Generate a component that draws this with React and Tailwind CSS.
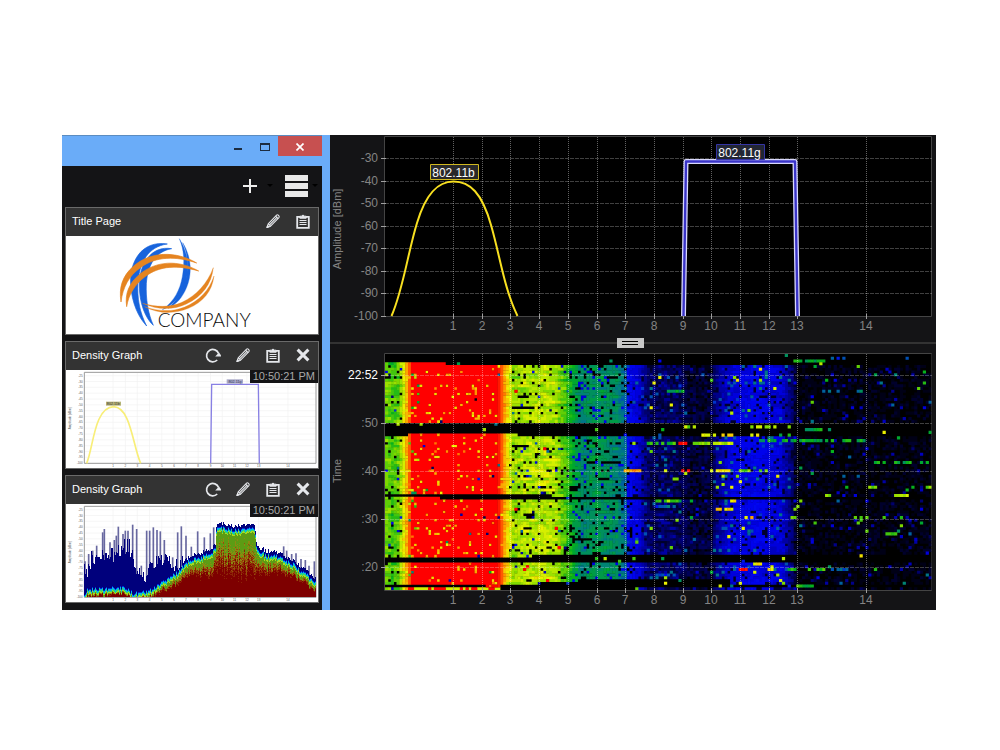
import { useMemo } from "react";

const channels = [
  { name: "1", x: 123 }, { name: "2", x: 152 }, { name: "3", x: 180 }, { name: "4", x: 209 },
  { name: "5", x: 238 }, { name: "6", x: 267 }, { name: "7", x: 295 }, { name: "8", x: 324 },
  { name: "9", x: 353 }, { name: "10", x: 381 }, { name: "11", x: 410 }, { name: "12", x: 439 },
  { name: "13", x: 467 }, { name: "14", x: 536 },
];

const amplitudes = [
  { name: "-30", y: 23 }, { name: "-40", y: 46 }, { name: "-50", y: 68 }, { name: "-60", y: 91 },
  { name: "-70", y: 113 }, { name: "-80", y: 136 }, { name: "-90", y: 158 }, { name: "-100", y: 181 },
];

const times = [
  { name: "22:52", y: 27, bright: true }, { name: ":50", y: 75 }, { name: ":40", y: 123 },
  { name: ":30", y: 171 }, { name: ":20", y: 219 },
];

function makeRandom(seed) {
  let s = seed;
  return () => {
    s = (s * 1664525 + 1013904223) % 4294967296;
    return s / 4294967296;
  };
}

// linear interpolation in a list of [position, value]
function lerp(points, at) {
  if (at <= points[0][0]) return points[0][1];
  for (let i = 1; i < points.length; i++) {
    if (at <= points[i][0]) {
      const [x0, y0] = points[i - 1];
      const [x1, y1] = points[i];
      return y0 + ((y1 - y0) * (at - x0)) / (x1 - x0);
    }
  }
  return points[points.length - 1][1];
}

const heatStops = [
  [0, [0, 0, 0]], [0.12, [0, 0, 105]], [0.24, [0, 0, 235]], [0.29, [0, 10, 240]], [0.35, [0, 80, 180]],
  [0.42, [0, 130, 120]], [0.52, [0, 175, 30]], [0.62, [120, 215, 0]], [0.72, [235, 245, 0]],
  [0.86, [255, 140, 0]], [0.97, [255, 0, 0]], [1, [255, 0, 0]],
];

function heatColor(v) {
  const c = [0, 1, 2].map((k) => Math.round(lerp(heatStops.map(([p, rgb]) => [p, rgb[k]]), v)));
  return `rgb(${c.join(",")})`;
}

// turns a grid of color keys into one path per color, the overlap hides seams between cells
function gridToPaths(rows, cols, overlap, getKey) {
  const paths = {};
  for (let r = 0; r < rows; r++) {
    let start = 0;
    let key = getKey(r, 0);
    for (let c = 1; c <= cols; c++) {
      const next = c < cols ? getKey(r, c) : null;
      if (next !== key || c === cols) {
        const w = c - start + (c < cols ? overlap : 0);
        const h = r < rows - 1 ? 1 + overlap : 1;
        if (key !== null) paths[key] = (paths[key] || "") + `M${start} ${r}h${w}v${h}h-${w}z`;
        start = c;
        key = next;
      }
    }
  }
  return Object.entries(paths);
}

const ROWS = 86;
const COLS = 190;

const level = [
  [0, 0.62], [2, 0.57], [4, 0.6], [5.5, 0.68], [6.5, 0.75], [7.5, 0.84], [9, 1], [38, 1], [40, 0.9], [42, 0.75],
  [44, 0.64], [48, 0.66], [55, 0.68], [59, 0.66], [62, 0.58], [65, 0.49], [68, 0.43], [72, 0.46], [80, 0.44],
  [83, 0.38], [84, 0.28], [88, 0.21], [91, 0.12], [97, 0.16], [103, 0.13], [106, 0.05], [112, 0.05], [115, 0.15],
  [119, 0.22], [128, 0.25], [137, 0.22], [141, 0.13], [143, 0.02], [190, 0.01],
];

// bursts: row, first column, last column, level, density
const bursts = [
  [2, 141, 153, 0.5, 0.7], [1, 155, 160, 0.34, 0.7], [13, 98, 104, 0.48, 0.6], [13, 152, 167, 0.4, 0.5],
  [26, 100, 115, 0.66, 0.4], [26, 122, 142, 0.66, 0.35], [27, 145, 155, 0.5, 0.5], [29, 110, 130, 0.74, 0.5],
  [31, 130, 167, 0.5, 0.55], [32, 90, 101, 0.56, 0.6], [32, 101, 107, 0.97, 0.5], [32, 107, 121, 0.66, 0.8],
  [39, 166, 190, 0.5, 0.4], [42, 83, 89, 0.85, 0.7], [42, 103, 106, 1, 0.8], [42, 113, 121, 0.76, 0.7],
  [42, 122, 137, 0.6, 0.5], [48, 168, 172, 0.62, 0.9], [48, 188, 190, 0.62, 1], [51, 150, 155, 0.6, 0.7],
  [51, 177, 182, 0.66, 0.9], [53, 94, 107, 0.52, 0.7], [53, 118, 125, 0.76, 0.6], [55, 94, 104, 0.36, 0.7],
  [56, 113, 121, 0.76, 0.6], [59, 125, 128, 0.76, 0.9], [59, 140, 143, 0.6, 0.6], [59, 160, 180, 0.6, 0.45],
  [65, 174, 178, 0.55, 1], [76, 128, 131, 0.74, 0.8], [78, 123, 128, 0.95, 0.6], [78, 133, 135, 0.76, 1],
  [78, 140, 153, 0.55, 0.7], [78, 154, 162, 0.35, 0.5], [80, 94, 101, 0.3, 0.8], [84, 143, 149, 0.53, 1],
];

const blackRuns = [
  [8, 77, 81], [15, 46, 50], [19, 44, 52], [33, 44, 50], [39, 75, 82], [45, 74, 78], [58, 48, 52], [67, 66, 72],
];

function isGap(r, c) {
  if (r < 3) return true;
  if (r === 3) return c > 20;
  if (r >= 25 && r <= 28) return true;
  if (r === 29) return c < 8 || c > 45;
  if (r === 51) return c < 57;
  if (r === 52) return c > 18;
  if (r === 74 || r === 75) return true;
  if (r === 73) return c > 50;
  if (r === 82) return c > 66 && c < 120;
  if (r === 83) return c > 53 && c < 120;
  if (r === 84) return c < 35 || c > 39;
  if (r === 85) return c > 39 && c < 88;
  return false;
}

function buildWaterfall() {
  const random = makeRandom(2252);
  const grid = [];
  for (let r = 0; r < ROWS; r++) {
    const line = [];
    const busy = r % 7 === 0 || (r > 47 && r < 52) || (r > 67 && r < 73) ? 1.6 : 0.8;
    let drift = 0;
    for (let c = 0; c < COLS; c++) {
      const p = random();
      const q = random();
      drift = drift * 0.5 + (q - 0.5) * 0.5;
      let v = lerp(level, c);
      if (isGap(r, c)) {
        v = 0;
        if (p < 0.014) v = 0.25 + q * 0.5;
      } else if (v > 0.86) {
        if (p < 0.085 * busy) v = 0.72 + q * 0.16;
        else if (p > 0.993) v = q * 0.55;
        if (c < 12 && p > 0.88) v = 0.4 + q * 0.4;
        if (r === 85) v = p < 0.4 ? 0.7 : 0.97;
      } else if (v > 0.54) {
        v += drift * 0.17;
        if (c > 42 || c < 6) {
          if (p < 0.09 * busy) v = 0;
          else if (p < 0.115 * busy) v = 0.1 + q * 0.3;
          else if (p > 0.995) v = 0.97;
        }
      } else if (v > 0.26) {
        v += drift * 0.12;
        if (p < 0.11 * busy) v = 0;
        else if (p < 0.2 && c > 66 && c < 74) v = 0.22;
        else if (p < 0.15) v = 0.25;
      } else if (v > 0.1) {
        v += drift * 0.1;
        if (c > 91 && c < 108) v *= 0.4 + q * 0.6;
        if (p < 0.11) v = 0.06;
        else if (p > 0.987) v = 0.6 + q * 0.16;
        else if (p > 0.95) v = 0.33 + q * 0.08;
      } else {
        v = q * q * 0.05;
        if (c < 143) v = q * 0.11;
        if (p < 0.04) v = 0.08 + q * 0.15;
        else if (p > 0.986) v = 0.36 + q * 0.27;
      }
      line.push(v);
    }
    grid.push(line);
  }
  blackRuns.forEach(([r, from, to]) => {
    for (let c = from; c < to; c++) grid[r][c] = 0;
  });
  bursts.forEach(([r, from, to, v, density]) => {
    for (let c = from; c < to; c++) {
      if (random() < density) grid[r][c] = v + (random() - 0.5) * 0.12;
    }
  });
  return gridToPaths(ROWS, COLS, 0.12, (r, c) => Math.max(0, Math.min(40, Math.round(grid[r][c] * 40))));
}

const surface = [
  [55, 272], [65, 252], [120, 250], [180, 246], [200, 263], [220, 265], [260, 250], [300, 224], [340, 195],
  [370, 163], [400, 156], [440, 140], [448, 125], [450, 72], [470, 66], [500, 75], [510, 68], [525, 77], [545, 62],
  [566, 70], [572, 132], [600, 148], [640, 154], [680, 176], [720, 206], [750, 232],
];

const navyTop = [
  [55, 190], [62, 215], [75, 165], [95, 150], [120, 148], [150, 155], [165, 130], [190, 125], [200, 165], [220, 205],
  [240, 220], [262, 170], [280, 160], [300, 165], [330, 190], [350, 180],
];

const spikes = [
  [57, 172], [68, 150], [80, 140], [92, 125], [110, 85], [115, 75], [132, 115], [145, 108], [151, 95], [157, 68],
  [171, 90], [178, 80], [186, 80], [200, 62], [212, 75], [226, 185], [242, 80], [251, 80], [262, 70], [273, 78],
  [283, 82], [295, 108], [320, 160], [335, 85], [346, 67], [360, 95], [376, 128], [395, 82], [415, 100], [433, 88],
  [443, 70], [590, 138], [653, 127], [662, 140], [677, 150], [690, 148], [705, 165], [718, 168], [729, 185], [745, 172],
];

const densityColors = ["#00007c", "#0028d8", "#00b8e8", "#30d870", "#a8d820", "#5c9c14", "#8c8a10", "#96500a", "#8c2406", "#7e0000"];

const redDepth = [[55, 10], [200, 6], [260, 12], [370, 28], [440, 48], [572, 48], [640, 30], [680, 22], [750, 14]];

function buildDensity() {
  const random = makeRandom(77);
  const cols = 232;
  const rows = 91;
  const tops = [];
  for (let c = 0; c < cols; c++) {
    const x = 55 + c * 3;
    const top = lerp(surface, x) + (random() - 0.5) * 12;
    const navy = x < 350 ? Math.min(top, lerp(navyTop, x) + (random() - 0.5) * 50) : top - 8;
    tops.push([x, top, navy, (random() - 0.5) * 0.45]);
  }
  return gridToPaths(rows, cols, 0, (r, c) => {
    const [x, top, navy, jitter] = tops[c];
    const y = 7 + r * 3;
    if (y < navy) return null;
    const d = y - top;
    if (d < 3) return 0;
    if (d < 6) return 1;
    if (d < 10) return 2;
    if (d < 14) return 3;
    if (d < 18) return 4;
    const plateau = x > 449 && x < 571;
    const t = (d - 15) / (plateau ? 100 : lerp(redDepth, x)) + jitter + (random() - 0.5) * 0.5;
    if (t < 0.5) return 5;
    if (t < 0.7) return 6;
    if (t < 0.85) return 7;
    if (t < 1.1) return 8;
    return 9;
  });
}

function PencilIcon() {
  return (
    <svg viewBox="0 0 16 16" className="h-4 w-4" fill="none" stroke="currentColor" strokeWidth="1.1" strokeLinejoin="round">
      <path d="M2 14.5 3.2 10.8 11.6 2.2Q12.4 1.4 13.2 2.2L13.9 2.9Q14.6 3.7 13.9 4.6L5.6 13.2Z" />
      <path d="M3.2 10.8 5.6 13.2M4.4 12 12.4 3.8M10.6 3.2 13 5.6" />
      <path d="M2 14.5 2.6 12.6 3.8 13.8Z" fill="currentColor" />
    </svg>
  );
}

function ClipboardIcon() {
  return (
    <svg viewBox="0 0 16 16" className="h-4 w-4" fill="none" stroke="currentColor">
      <path d="M5 3.8H2.2V14.8h11.6V3.8h-2.8" strokeWidth="1.8" />
      <path d="M4.8 5.2V3.2h1.8a1.5 1.5 0 0 1 2.8 0h1.8v2z" fill="currentColor" strokeWidth="1" />
      <path d="M4.5 7.5h7M4.5 9.5h7M4.5 11.5h7" strokeWidth="1.1" />
    </svg>
  );
}

function RefreshIcon() {
  return (
    <svg viewBox="0 0 16 16" className="h-4 w-4" fill="none" stroke="currentColor">
      <path d="M12.2 13A6.2 6.2 0 1 1 13.6 6.5" strokeWidth="1.7" />
      <path d="M10.2 9.4 14 5.6 17 9.4Z" fill="currentColor" stroke="none" />
    </svg>
  );
}

function CloseIcon() {
  return (
    <svg viewBox="0 0 16 16" className="h-4 w-4" fill="none" stroke="currentColor" strokeWidth="3">
      <path d="M2.6 2.6 13.4 13.4M13.4 2.6 2.6 13.4" />
    </svg>
  );
}

function IconButton({ label, children }) {
  return (
    <button aria-label={label} className="h-4 w-4 text-gray-200 hover:text-white">
      {children}
    </button>
  );
}

function Card({ title, full, time, children }) {
  return (
    <section className="border border-[#6a6a6a] bg-white">
      <header className="flex h-7 items-center gap-3.5 bg-[#333333] pr-[7px] pb-0.5 pl-1.5">
        <h2 className="mr-auto text-[11px] text-white">{title}</h2>
        {full && <IconButton label="Refresh"><RefreshIcon /></IconButton>}
        <IconButton label="Edit"><PencilIcon /></IconButton>
        <IconButton label="Copy"><ClipboardIcon /></IconButton>
        {full && <IconButton label="Remove"><CloseIcon /></IconButton>}
      </header>
      <div className="relative">
        {children}
        {time && (
          <time className="absolute top-0 right-0 bg-[#141416] px-[3px] text-[11px] leading-[13px] text-[#a8a8a8]">{time}</time>
        )}
      </div>
    </section>
  );
}

function CompanyLogo() {
  return (
    <svg viewBox="0 0 756 294" className="block w-full">
      <g fill="#1763dc" stroke="#1763dc" strokeWidth="2">
        <path d="M304 24C226 12 190 78 194 145C197 203 219 246 242 270C221 230 213 186 216 140C220 80 246 32 304 24Z" />
        <path d="M317 38C255 28 222 84 220 140C218 200 239 248 262 268C246 232 239 190 241 142C245 88 268 46 317 38Z" />
        <path d="M340 8C366 50 371 94 359 137C346 181 320 208 289 221C326 195 342 161 349 122C356 80 355 42 340 8Z" strokeWidth="1" />
        <path d="M350 20C378 65 378 116 362 154C348 187 331 205 306 217C335 191 352 161 361 122C368 84 364 50 350 20Z" strokeWidth="1" />
      </g>
      <g fill="#e58420" stroke="#e58420" strokeWidth="2">
        <path d="M392 81C330 44 252 46 202 91C169 120 158 155 165 198C170 155 189 119 223 95C270 60 331 60 392 81Z" />
        <path d="M398 105C336 70 270 75 222 114C189 141 176 173 182 212C188 175 206 146 237 122C282 88 336 87 398 105Z" />
        <path d="M442 95C424 142 392 178 348 199C313 215 271 214 230 202C276 223 322 222 361 204C409 181 436 145 442 95Z" strokeWidth="1" />
        <path d="M444 120C430 162 400 195 356 213C318 229 277 226 236 212C278 235 329 233 367 217C412 198 438 166 444 120Z" strokeWidth="1" />
      </g>
      <text x="275" y="273" fontSize="57" fontWeight="300" fill="#0a0a0a" className="font-[Lato,sans-serif]">COMPANY</text>
    </svg>
  );
}

function ThumbnailAxes() {
  const levels = Array.from({ length: 16 }, (_, i) => -25 - i * 5);
  return (
    <g fontSize="9" fill="#555555">
      {levels.map((db, i) => (
        <g key={db}>
          <path d={`M55 ${17 + i * 17.5}H750`} stroke="#f2f2f2" strokeWidth="2" />
          <text x="50" y={20 + i * 17.5} textAnchor="end">{db}</text>
        </g>
      ))}
      {channels.map(({ name, x }) => {
        const left = (x - 55) * 1.27 + 55;
        return (
          <g key={name}>
            <path d={`M${left} 7V280`} stroke="#f2f2f2" strokeWidth="2" />
            <text x={left} y="290" textAnchor="middle">{name}</text>
          </g>
        );
      })}
      <text transform="translate(14 145) rotate(-90)" textAnchor="middle">Amplitude [dBm]</text>
      <path d="M55 7H750V280H55Z" fill="none" stroke="#999999" strokeWidth="3" />
    </g>
  );
}

function SignalThumbnail() {
  return (
    <svg viewBox="0 0 756 294" className="block w-full">
      <ThumbnailAxes />
      <path d="M62 280C82 235 84 112 143 110C194 112 200 225 224 280" fill="none" stroke="#f8ee78" strokeWidth="5" />
      <path d="M434 280 437 43H577L580 280" fill="none" stroke="#8880e4" strokeWidth="4" />
      <path d="M120 95h45v12h-45z" fill="#b8b478" />
      <path d="M482 28h49v13h-49z" fill="#a8a8c8" />
      <text x="142" y="105" fontSize="11" textAnchor="middle" fill="#333333">802.11b</text>
      <text x="507" y="39" fontSize="11" textAnchor="middle" fill="#333355">802.11g</text>
    </svg>
  );
}

function DensityThumbnail() {
  const paths = useMemo(buildDensity, []);
  return (
    <svg viewBox="0 0 756 294" className="block w-full">
      <ThumbnailAxes />
      {spikes.map(([x, y]) => (
        <path key={x} d={`M${x} ${y}V${lerp(surface, x)}`} stroke="#6868a0" strokeWidth="5" />
      ))}
      <g transform="translate(55 7) scale(3)" shapeRendering="crispEdges">
        {paths.map(([key, d]) => (
          <path key={key} d={d} fill={densityColors[key]} />
        ))}
      </g>
    </svg>
  );
}

function ChannelAxis({ bottom }) {
  return channels.map(({ name, x }) => (
    <g key={name}>
      <path d={`M${x + 0.5} ${bottom - 2}v5`} stroke="#a0a0a0" />
      <text x={x} y={bottom + 14} textAnchor="middle" fill="#848484">{name}</text>
    </g>
  ));
}

function Grid({ top, bottom, lines }) {
  return (
    <g stroke="#ffffff" strokeOpacity="0.25">
      {lines.map(({ y }) => (
        <path key={y} d={`M55 ${y + 0.5}H602`} strokeDasharray="4 1" />
      ))}
      {channels.map(({ x }) => (
        <path key={x} d={`M${x + 0.5} ${top}V${bottom}`} strokeDasharray="1 1" strokeOpacity="0.38" />
      ))}
    </g>
  );
}

function ScaleLabels({ items }) {
  return items.map(({ name, y, bright }) => (
    <g key={name}>
      <path d={`M51 ${y + 0.5}h5`} stroke="#a0a0a0" />
      <text x="48" y={y + 4} textAnchor="end" fill={bright ? "#ffffff" : "#848484"}>{name}</text>
    </g>
  ));
}

function AmplitudeChart() {
  return (
    <svg viewBox="0 0 606 203" className="block w-full" fontSize="12">
      <path d="M54.5 1.5H601.5V181.5H54.5Z" fill="#000000" stroke="#444444" />
      <Grid top={2} bottom={181} lines={amplitudes.slice(0, 7)} />
      <ScaleLabels items={amplitudes} />
      <ChannelAxis bottom={181} />
      <text transform="translate(11 94) rotate(-90)" fontSize="11" textAnchor="middle" fill="#848484">Amplitude [dBm]</text>
      <path
        d="M61.5 181C73 155 78 117 87 88C96 58 108 46.5 123.5 46.5C140 46.5 152 58 161 90C170 121 174 153 187.5 181"
        fill="none" stroke="#f8e020" strokeWidth="2"
      />
      <g fill="none" strokeLinejoin="round">
        <path d="M353.5 181 356 26.5H465L467.5 181" stroke="#d8d8fc" strokeWidth="5" />
        <path d="M353.5 181 356 26.5H465L467.5 181" stroke="#3a34c8" strokeWidth="2.4" />
      </g>
      <path d="M100.5 29.5h48v15h-48z" fill="#292929" stroke="#d0b820" />
      <text x="123.5" y="42" textAnchor="middle" fill="#ffffff">802.11b</text>
      <path d="M386.5 9.5h48v15h-48z" fill="#222634" stroke="#3434a4" />
      <text x="409.5" y="22" textAnchor="middle" fill="#ffffff">802.11g</text>
    </svg>
  );
}

function Waterfall() {
  const paths = useMemo(buildWaterfall, []);
  return (
    <svg viewBox="0 0 606 262" className="block w-full" fontSize="12">
      <path d="M54.5 5.5H601.5V242.5H54.5Z" fill="#000000" stroke="#444444" />
      <g transform="translate(55 6) scale(2.876 2.744)">
        {paths.map(([key, d]) => (
          <path key={key} d={d} fill={heatColor(key / 40)} />
        ))}
      </g>
      <Grid top={6} bottom={242} lines={times} />
      <ScaleLabels items={times} />
      <ChannelAxis bottom={242} />
      <text transform="translate(11 123) rotate(-90)" fontSize="11" textAnchor="middle" fill="#848484">Time</text>
    </svg>
  );
}

function ReportPanel() {
  return (
    <aside className="flex w-[268px] shrink-0 flex-col border-r-8 border-[#6aacf8] bg-[#141416]">
      <div className="flex h-[31px] items-start justify-end border-t border-[#5b8cc0] bg-[#6aacf8]">
        <button aria-label="Minimize" className="flex h-5 w-7 items-center justify-center">
          <span className="mt-1.5 ml-1 h-0.5 w-2 bg-[#1c2c40]"></span>
        </button>
        <button aria-label="Maximize" className="flex h-5 w-7 items-center justify-center">
          <span className="mt-0.5 ml-0.5 h-2 w-2.5 border border-t-2 border-[#1c2c40]"></span>
        </button>
        <button aria-label="Close" className="flex h-5 w-11 items-center justify-center bg-[#c75050]">
          <svg viewBox="0 0 8 8" className="mt-0.5 h-2 w-2" stroke="#ffffff" strokeWidth="1.7">
            <path d="M.5.5 7.5 7.5M7.5.5.5 7.5" />
          </svg>
        </button>
      </div>
      <div className="flex h-[41px] items-center justify-end gap-3 pr-1 pb-0.5">
        <button aria-label="Add page" className="flex items-center gap-2.5">
          <svg viewBox="0 0 14 14" className="h-3.5 w-3.5" stroke="#eeeeee" strokeWidth="2">
            <path d="M7 0V14M0 7H14" />
          </svg>
          <svg viewBox="0 0 6 3" className="h-[3px] w-1.5"><path d="M0 0H6L3 3Z" fill="#000000" /></svg>
        </button>
        <button aria-label="Menu" className="flex items-center gap-1">
          <svg viewBox="0 0 23 22" className="h-[22px] w-[23px]" fill="#e8e8e8">
            <path d="M0 0h23v6H0zM0 8h23v6H0zM0 16h23v6H0z" />
          </svg>
          <svg viewBox="0 0 6 3" className="h-[3px] w-1.5"><path d="M0 0H6L3 3Z" fill="#000000" /></svg>
        </button>
      </div>
      <div className="flex flex-col gap-1.5 px-[3px]">
        <Card title="Title Page">
          <CompanyLogo />
        </Card>
        <Card title="Density Graph" full time="10:50:21 PM">
          <SignalThumbnail />
        </Card>
        <Card title="Density Graph" full time="10:50:21 PM">
          <DensityThumbnail />
        </Card>
      </div>
    </aside>
  );
}

export default function App() {
  return (
    <div className="min-h-screen bg-white pt-[135px] pr-16 pl-[62px] font-['Liberation_Sans',Arial,sans-serif]">
      <div className="flex bg-[#141416]">
        <ReportPanel />
        <main className="min-w-0 flex-1">
          <AmplitudeChart />
          <div className="flex h-2.5 items-center">
            <span className="h-0.5 flex-1 bg-[#333333]"></span>
            <button aria-label="Resize charts" className="-ml-1.5 flex h-2.5 w-[27px] cursor-row-resize flex-col items-center justify-center gap-0.5 bg-[#c8c8c8]">
              <span className="h-px w-4 bg-black"></span>
              <span className="h-px w-4 bg-black"></span>
            </button>
            <span className="h-0.5 flex-1 bg-[#333333]"></span>
          </div>
          <Waterfall />
        </main>
      </div>
    </div>
  );
}
